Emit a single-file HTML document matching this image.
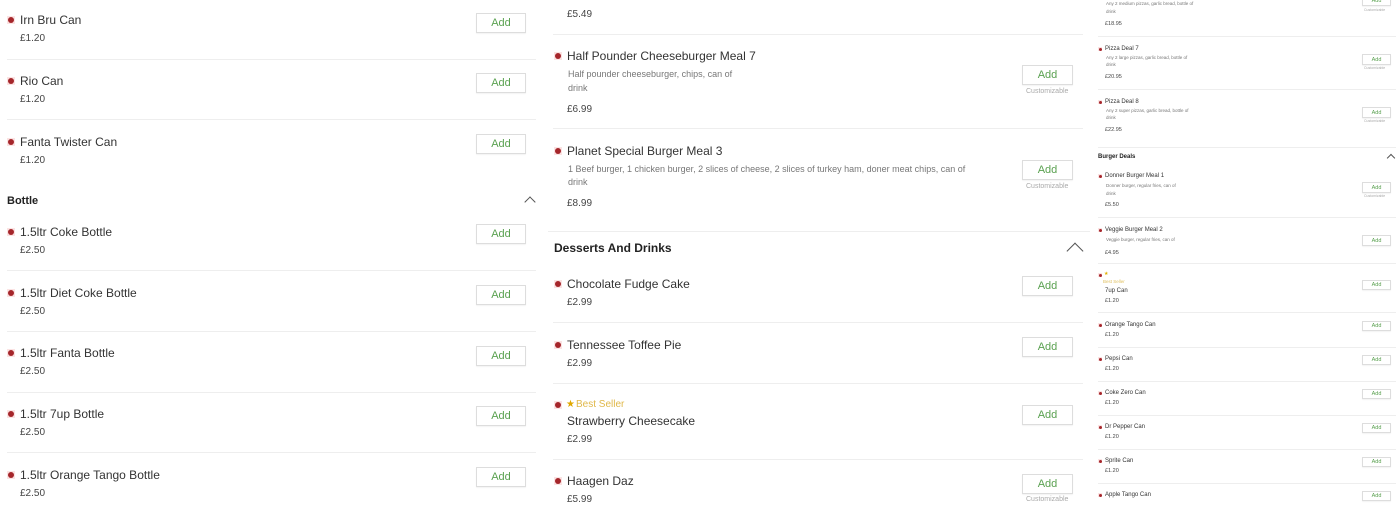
<!DOCTYPE html>
<html><head><meta charset="utf-8"><style>
*{margin:0;padding:0;box-sizing:border-box}
body{width:1400px;height:500px;overflow:hidden;background:#fff;font-family:"Liberation Sans",sans-serif;position:relative}
.a{position:absolute;line-height:1;white-space:nowrap}
.n{color:#333}
.p{color:#444}
.d{color:#777}
.h{color:#222;font-weight:bold}
.sep{position:absolute;height:1px;background:#eee}
.dot{position:absolute;background:#fbe3e3}
.dot i{position:absolute;border-radius:50%;background:#a5262b}
.btn{position:absolute;border:1px solid #ddd;color:#5aa150;display:flex;align-items:center;justify-content:center;box-shadow:0 1px 1px rgba(0,0,0,.05)}
.cu{position:absolute;color:#aaa;line-height:1;white-space:nowrap}
.chev{position:absolute;border-left:1px solid #555;border-top:1px solid #555;transform:rotate(45deg)}
</style></head><body>

<!-- Column 1 -->
<div class="dot" style="left:7px;top:16px;width:8px;height:8px"><i style="left:1px;top:1px;width:6px;height:6px"></i></div>
<div class="a n" style="left:20px;top:14px;font-size:12px">Irn Bru Can</div>
<div class="a p" style="left:20px;top:34px;font-size:10px">£1.20</div>
<div class="btn" style="left:476px;top:13px;width:50px;height:20px;font-size:11px">Add</div>
<div class="sep" style="left:7px;top:59px;width:529px"></div>

<div class="dot" style="left:7px;top:77px;width:8px;height:8px"><i style="left:1px;top:1px;width:6px;height:6px"></i></div>
<div class="a n" style="left:20px;top:75px;font-size:12px">Rio Can</div>
<div class="a p" style="left:20px;top:95px;font-size:10px">£1.20</div>
<div class="btn" style="left:476px;top:73px;width:50px;height:20px;font-size:11px">Add</div>
<div class="sep" style="left:7px;top:119px;width:529px"></div>

<div class="dot" style="left:7px;top:138px;width:8px;height:8px"><i style="left:1px;top:1px;width:6px;height:6px"></i></div>
<div class="a n" style="left:20px;top:136px;font-size:12px">Fanta Twister Can</div>
<div class="a p" style="left:20px;top:156px;font-size:10px">£1.20</div>
<div class="btn" style="left:476px;top:134px;width:50px;height:20px;font-size:11px">Add</div>

<div class="a h" style="left:7px;top:196px;font-size:11px">Bottle</div>
<div class="chev" style="left:526px;top:198px;width:8px;height:8px"></div>

<div class="dot" style="left:7px;top:228px;width:8px;height:8px"><i style="left:1px;top:1px;width:6px;height:6px"></i></div>
<div class="a n" style="left:20px;top:226px;font-size:12px">1.5ltr Coke Bottle</div>
<div class="a p" style="left:20px;top:246px;font-size:10px">£2.50</div>
<div class="btn" style="left:476px;top:224px;width:50px;height:20px;font-size:11px">Add</div>
<div class="sep" style="left:7px;top:270px;width:529px"></div>

<div class="dot" style="left:7px;top:289px;width:8px;height:8px"><i style="left:1px;top:1px;width:6px;height:6px"></i></div>
<div class="a n" style="left:20px;top:287px;font-size:12px">1.5ltr Diet Coke Bottle</div>
<div class="a p" style="left:20px;top:307px;font-size:10px">£2.50</div>
<div class="btn" style="left:476px;top:285px;width:50px;height:20px;font-size:11px">Add</div>
<div class="sep" style="left:7px;top:331px;width:529px"></div>

<div class="dot" style="left:7px;top:349px;width:8px;height:8px"><i style="left:1px;top:1px;width:6px;height:6px"></i></div>
<div class="a n" style="left:20px;top:347px;font-size:12px">1.5ltr Fanta Bottle</div>
<div class="a p" style="left:20px;top:367px;font-size:10px">£2.50</div>
<div class="btn" style="left:476px;top:346px;width:50px;height:20px;font-size:11px">Add</div>
<div class="sep" style="left:7px;top:392px;width:529px"></div>

<div class="dot" style="left:7px;top:410px;width:8px;height:8px"><i style="left:1px;top:1px;width:6px;height:6px"></i></div>
<div class="a n" style="left:20px;top:408px;font-size:12px">1.5ltr 7up Bottle</div>
<div class="a p" style="left:20px;top:428px;font-size:10px">£2.50</div>
<div class="btn" style="left:476px;top:406px;width:50px;height:20px;font-size:11px">Add</div>
<div class="sep" style="left:7px;top:452px;width:529px"></div>

<div class="dot" style="left:7px;top:471px;width:8px;height:8px"><i style="left:1px;top:1px;width:6px;height:6px"></i></div>
<div class="a n" style="left:20px;top:469px;font-size:12px">1.5ltr Orange Tango Bottle</div>
<div class="a p" style="left:20px;top:489px;font-size:10px">£2.50</div>
<div class="btn" style="left:476px;top:467px;width:50px;height:20px;font-size:11px">Add</div>

<!-- Column 2 -->
<div class="a p" style="left:567px;top:10px;font-size:10px">£5.49</div>
<div class="sep" style="left:553px;top:34px;width:530px"></div>

<div class="dot" style="left:554px;top:52px;width:8px;height:8px"><i style="left:1px;top:1px;width:6px;height:6px"></i></div>
<div class="a n" style="left:567px;top:50px;font-size:12px">Half Pounder Cheeseburger Meal 7</div>
<div class="a d" style="left:568px;top:70px;font-size:9px">Half pounder cheeseburger, chips, can of</div>
<div class="a d" style="left:568px;top:84px;font-size:9px">drink</div>
<div class="a p" style="left:567px;top:105px;font-size:10px">£6.99</div>
<div class="btn" style="left:1022px;top:65px;width:51px;height:20px;font-size:11px">Add</div>
<div class="cu" style="left:1026px;top:88px;font-size:7px">Customizable</div>
<div class="sep" style="left:553px;top:128px;width:530px"></div>

<div class="dot" style="left:554px;top:147px;width:8px;height:8px"><i style="left:1px;top:1px;width:6px;height:6px"></i></div>
<div class="a n" style="left:567px;top:145px;font-size:12px">Planet Special Burger Meal 3</div>
<div class="a d" style="left:568px;top:165px;font-size:9px">1 Beef burger, 1 chicken burger, 2 slices of cheese, 2 slices of turkey ham, doner meat chips, can of</div>
<div class="a d" style="left:568px;top:178px;font-size:9px">drink</div>
<div class="a p" style="left:567px;top:199px;font-size:10px">£8.99</div>
<div class="btn" style="left:1022px;top:160px;width:51px;height:20px;font-size:11px">Add</div>
<div class="cu" style="left:1026px;top:183px;font-size:7px">Customizable</div>
<div class="sep" style="left:548px;top:231px;width:542px"></div>

<div class="a h" style="left:554px;top:242px;font-size:12px">Desserts And Drinks</div>
<div class="chev" style="left:1069px;top:245px;width:12px;height:12px"></div>

<div class="dot" style="left:554px;top:280px;width:8px;height:8px"><i style="left:1px;top:1px;width:6px;height:6px"></i></div>
<div class="a n" style="left:567px;top:278px;font-size:12px">Chocolate Fudge Cake</div>
<div class="a p" style="left:567px;top:298px;font-size:10px">£2.99</div>
<div class="btn" style="left:1022px;top:276px;width:51px;height:20px;font-size:11px">Add</div>
<div class="sep" style="left:553px;top:322px;width:530px"></div>

<div class="dot" style="left:554px;top:341px;width:8px;height:8px"><i style="left:1px;top:1px;width:6px;height:6px"></i></div>
<div class="a n" style="left:567px;top:339px;font-size:12px">Tennessee Toffee Pie</div>
<div class="a p" style="left:567px;top:359px;font-size:10px">£2.99</div>
<div class="btn" style="left:1022px;top:337px;width:51px;height:20px;font-size:11px">Add</div>
<div class="sep" style="left:553px;top:383px;width:530px"></div>

<div class="dot" style="left:554px;top:401px;width:8px;height:8px"><i style="left:1px;top:1px;width:6px;height:6px"></i></div>
<div class="a" style="left:566px;top:400px;font-size:10px;color:#e0a800">★</div>
<div class="a" style="left:576px;top:400px;font-size:10px;color:#e0b84a">Best Seller</div>
<div class="a n" style="left:567px;top:415px;font-size:12px">Strawberry Cheesecake</div>
<div class="a p" style="left:567px;top:435px;font-size:10px">£2.99</div>
<div class="btn" style="left:1022px;top:405px;width:51px;height:20px;font-size:11px">Add</div>
<div class="sep" style="left:553px;top:459px;width:530px"></div>

<div class="dot" style="left:554px;top:477px;width:8px;height:8px"><i style="left:1px;top:1px;width:6px;height:6px"></i></div>
<div class="a n" style="left:567px;top:475px;font-size:12px">Haagen Daz</div>
<div class="a p" style="left:567px;top:495px;font-size:10px">£5.99</div>
<div class="btn" style="left:1022px;top:474px;width:51px;height:20px;font-size:11px">Add</div>
<div class="cu" style="left:1026px;top:496px;font-size:7px">Customizable</div>

<!-- Column 3 -->
<div class="a d" style="left:1106px;top:2px;font-size:4.5px">Any 2 medium pizzas, garlic bread, bottle of</div>
<div class="a d" style="left:1106px;top:10px;font-size:4.5px">drink</div>
<div class="a p" style="left:1105px;top:22px;font-size:5.5px">£18.95</div>
<div class="btn" style="left:1362px;top:-4px;width:29px;height:10px;font-size:5.5px">Add</div>
<div class="cu" style="left:1364px;top:9px;font-size:3.5px">Customizable</div>
<div class="sep" style="left:1098px;top:36px;width:298px"></div>

<div class="dot" style="left:1098px;top:47px;width:4px;height:4px"><i style="left:0.5px;top:0.5px;width:3px;height:3px"></i></div>
<div class="a n" style="left:1105px;top:46px;font-size:6px">Pizza Deal 7</div>
<div class="a d" style="left:1106px;top:56px;font-size:4.5px">Any 2 large pizzas, garlic bread, bottle of</div>
<div class="a d" style="left:1106px;top:63px;font-size:4.5px">drink</div>
<div class="a p" style="left:1105px;top:75px;font-size:5.5px">£20.95</div>
<div class="btn" style="left:1362px;top:54px;width:29px;height:11px;font-size:5.5px">Add</div>
<div class="cu" style="left:1364px;top:67px;font-size:3.5px">Customizable</div>
<div class="sep" style="left:1098px;top:89px;width:298px"></div>

<div class="dot" style="left:1098px;top:100px;width:4px;height:4px"><i style="left:0.5px;top:0.5px;width:3px;height:3px"></i></div>
<div class="a n" style="left:1105px;top:99px;font-size:6px">Pizza Deal 8</div>
<div class="a d" style="left:1106px;top:109px;font-size:4.5px">Any 2 super pizzas, garlic bread, bottle of</div>
<div class="a d" style="left:1106px;top:116px;font-size:4.5px">drink</div>
<div class="a p" style="left:1105px;top:128px;font-size:5.5px">£22.95</div>
<div class="btn" style="left:1362px;top:107px;width:29px;height:11px;font-size:5.5px">Add</div>
<div class="cu" style="left:1364px;top:120px;font-size:3.5px">Customizable</div>
<div class="sep" style="left:1098px;top:147px;width:298px"></div>

<div class="a h" style="left:1098px;top:154px;font-size:6px">Burger Deals</div>
<div class="chev" style="left:1388px;top:155px;width:6px;height:6px"></div>

<div class="dot" style="left:1098px;top:174px;width:4px;height:4px"><i style="left:0.5px;top:0.5px;width:3px;height:3px"></i></div>
<div class="a n" style="left:1105px;top:173px;font-size:6px">Donner Burger Meal 1</div>
<div class="a d" style="left:1106px;top:184px;font-size:4.5px">Donner burger, regular fries, can of</div>
<div class="a d" style="left:1106px;top:192px;font-size:4.5px">drink</div>
<div class="a p" style="left:1105px;top:203px;font-size:5.5px">£5.50</div>
<div class="btn" style="left:1362px;top:182px;width:29px;height:11px;font-size:5.5px">Add</div>
<div class="cu" style="left:1364px;top:195px;font-size:3.5px">Customizable</div>
<div class="sep" style="left:1098px;top:217px;width:298px"></div>

<div class="dot" style="left:1098px;top:228px;width:4px;height:4px"><i style="left:0.5px;top:0.5px;width:3px;height:3px"></i></div>
<div class="a n" style="left:1105px;top:227px;font-size:6px">Veggie Burger Meal 2</div>
<div class="a d" style="left:1106px;top:238px;font-size:4.5px">Veggie burger, regular fries, can of</div>
<div class="a p" style="left:1105px;top:251px;font-size:5.5px">£4.95</div>
<div class="btn" style="left:1362px;top:235px;width:29px;height:11px;font-size:5.5px">Add</div>
<div class="sep" style="left:1098px;top:263px;width:298px"></div>

<div class="dot" style="left:1098px;top:273px;width:4px;height:4px"><i style="left:0.5px;top:0.5px;width:3px;height:3px"></i></div>
<div class="a" style="left:1104px;top:272px;font-size:5px;color:#e0b000">★</div>
<div class="a" style="left:1103px;top:280px;font-size:4.5px;color:#e0c060">Best Seller</div>
<div class="a n" style="left:1105px;top:288px;font-size:6px">7up Can</div>
<div class="a p" style="left:1105px;top:299px;font-size:5.5px">£1.20</div>
<div class="btn" style="left:1362px;top:280px;width:29px;height:10px;font-size:5.5px">Add</div>
<div class="sep" style="left:1098px;top:312px;width:298px"></div>

<div class="dot" style="left:1098px;top:323px;width:4px;height:4px"><i style="left:0.5px;top:0.5px;width:3px;height:3px"></i></div>
<div class="a n" style="left:1105px;top:322px;font-size:6px">Orange Tango Can</div>
<div class="a p" style="left:1105px;top:333px;font-size:5.5px">£1.20</div>
<div class="btn" style="left:1362px;top:321px;width:29px;height:10px;font-size:5.5px">Add</div>
<div class="sep" style="left:1098px;top:347px;width:298px"></div>

<div class="dot" style="left:1098px;top:357px;width:4px;height:4px"><i style="left:0.5px;top:0.5px;width:3px;height:3px"></i></div>
<div class="a n" style="left:1105px;top:356px;font-size:6px">Pepsi Can</div>
<div class="a p" style="left:1105px;top:367px;font-size:5.5px">£1.20</div>
<div class="btn" style="left:1362px;top:355px;width:29px;height:10px;font-size:5.5px">Add</div>
<div class="sep" style="left:1098px;top:381px;width:298px"></div>

<div class="dot" style="left:1098px;top:391px;width:4px;height:4px"><i style="left:0.5px;top:0.5px;width:3px;height:3px"></i></div>
<div class="a n" style="left:1105px;top:390px;font-size:6px">Coke Zero Can</div>
<div class="a p" style="left:1105px;top:401px;font-size:5.5px">£1.20</div>
<div class="btn" style="left:1362px;top:389px;width:29px;height:10px;font-size:5.5px">Add</div>
<div class="sep" style="left:1098px;top:415px;width:298px"></div>

<div class="dot" style="left:1098px;top:425px;width:4px;height:4px"><i style="left:0.5px;top:0.5px;width:3px;height:3px"></i></div>
<div class="a n" style="left:1105px;top:424px;font-size:6px">Dr Pepper Can</div>
<div class="a p" style="left:1105px;top:435px;font-size:5.5px">£1.20</div>
<div class="btn" style="left:1362px;top:423px;width:29px;height:10px;font-size:5.5px">Add</div>
<div class="sep" style="left:1098px;top:449px;width:298px"></div>

<div class="dot" style="left:1098px;top:459px;width:4px;height:4px"><i style="left:0.5px;top:0.5px;width:3px;height:3px"></i></div>
<div class="a n" style="left:1105px;top:458px;font-size:6px">Sprite Can</div>
<div class="a p" style="left:1105px;top:469px;font-size:5.5px">£1.20</div>
<div class="btn" style="left:1362px;top:457px;width:29px;height:10px;font-size:5.5px">Add</div>
<div class="sep" style="left:1098px;top:483px;width:298px"></div>

<div class="dot" style="left:1098px;top:493px;width:4px;height:4px"><i style="left:0.5px;top:0.5px;width:3px;height:3px"></i></div>
<div class="a n" style="left:1105px;top:492px;font-size:6px">Apple Tango Can</div>
<div class="btn" style="left:1362px;top:491px;width:29px;height:10px;font-size:5.5px">Add</div>

</body></html>
